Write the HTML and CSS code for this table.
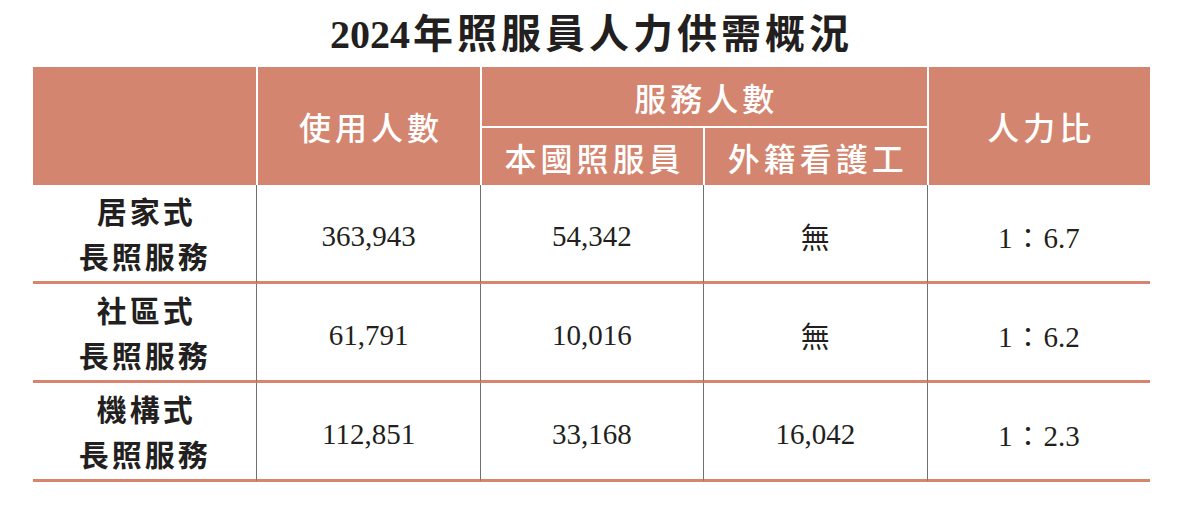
FILE: index.html
```html
<!DOCTYPE html>
<html lang="zh-Hant">
<head>
<meta charset="utf-8">
<title>2024年照服員人力供需概況</title>
<link rel="stylesheet" href="styles.css">
</head>
<body>
<div class="page">
  <h1 class="title"><span class="year">2024</span>年照服員人力供需概況</h1>
  <table class="grid">
    <colgroup>
      <col class="c"><col class="c"><col class="c"><col class="c"><col class="c">
    </colgroup>
    <thead>
      <tr class="h1">
        <th rowspan="2" class="first"></th>
        <th rowspan="2">使用人數</th>
        <th colspan="2" class="top">服務人數</th>
        <th rowspan="2">人力比</th>
      </tr>
      <tr class="h2">
        <th class="sub sub-first">本國照服員</th>
        <th class="sub">外籍看護工</th>
      </tr>
    </thead>
    <tbody>
      <tr>
        <td class="label">居家式<br>長照服務</td>
        <td>363,943</td>
        <td>54,342</td>
        <td class="cjk">無</td>
        <td>1<span class="colon">：</span>6.7</td>
      </tr>
      <tr>
        <td class="label">社區式<br>長照服務</td>
        <td>61,791</td>
        <td>10,016</td>
        <td class="cjk">無</td>
        <td>1<span class="colon">：</span>6.2</td>
      </tr>
      <tr>
        <td class="label">機構式<br>長照服務</td>
        <td>112,851</td>
        <td>33,168</td>
        <td>16,042</td>
        <td>1<span class="colon">：</span>2.3</td>
      </tr>
    </tbody>
  </table>
</div>
</body>
</html>
```

FILE: styles.css
```css
html, body {
  margin: 0;
  padding: 0;
  background: #ffffff;
}

.page {
  width: 1117px;
  padding: 0 0 0 33px;
}

.title {
  margin: 0;
  height: 67px;
  box-sizing: border-box;
  padding-top: 12px;
  text-align: center;
  font-family: "Liberation Serif", "Noto Sans CJK TC", serif;
  font-weight: 700;
  font-size: 40px;
  line-height: 46px;
  letter-spacing: 4px;
  color: #231f20;
}

.title .year {
  letter-spacing: 0;
  margin-right: 3px;
}

.grid {
  width: 1117px;
  table-layout: fixed;
  border-collapse: separate;
  border-spacing: 0;
}

.grid .c {
  width: 20%;
}

.grid th {
  background: #d4856f;
  color: #ffffff;
  font-family: "Noto Sans CJK TC", sans-serif;
  font-weight: 500;
  font-size: 32px;
  letter-spacing: 4px;
  text-indent: 4px;
  padding: 0;
  vertical-align: middle;
  text-align: center;
  border-left: 2px solid #ffffff;
}

.grid th.first {
  border-left: none;
}

.grid .h1 th {
  height: 59px;
}

.grid .h2 th {
  height: 57px;
}

.grid th.sub {
  border-top: 2px solid #ffffff;
}

.grid td {
  height: 96px;
  padding: 0;
  text-align: center;
  vertical-align: middle;
  font-family: "Liberation Serif", "Noto Sans CJK TC", serif;
  font-size: 29px;
  color: #231f20;
  border-left: 1.5px solid #707070;
  border-bottom: 3px solid #d8846e;
}

.grid td:not(.label) {
  height: 90px;
  padding-top: 6px;
}

.grid td.label {
  border-left: none;
  font-family: "Noto Sans CJK TC", sans-serif;
  font-weight: 700;
  font-size: 30px;
  line-height: 45px;
  letter-spacing: 3px;
  text-indent: 3px;
}

.grid td.cjk {
  font-family: "Noto Sans CJK TC", sans-serif;
  font-weight: 400;
  font-size: 29px;
}

.colon {
  font-family: "Noto Sans CJK TC", sans-serif;
  font-size: 27px;
  padding: 0 2px;
}
```
